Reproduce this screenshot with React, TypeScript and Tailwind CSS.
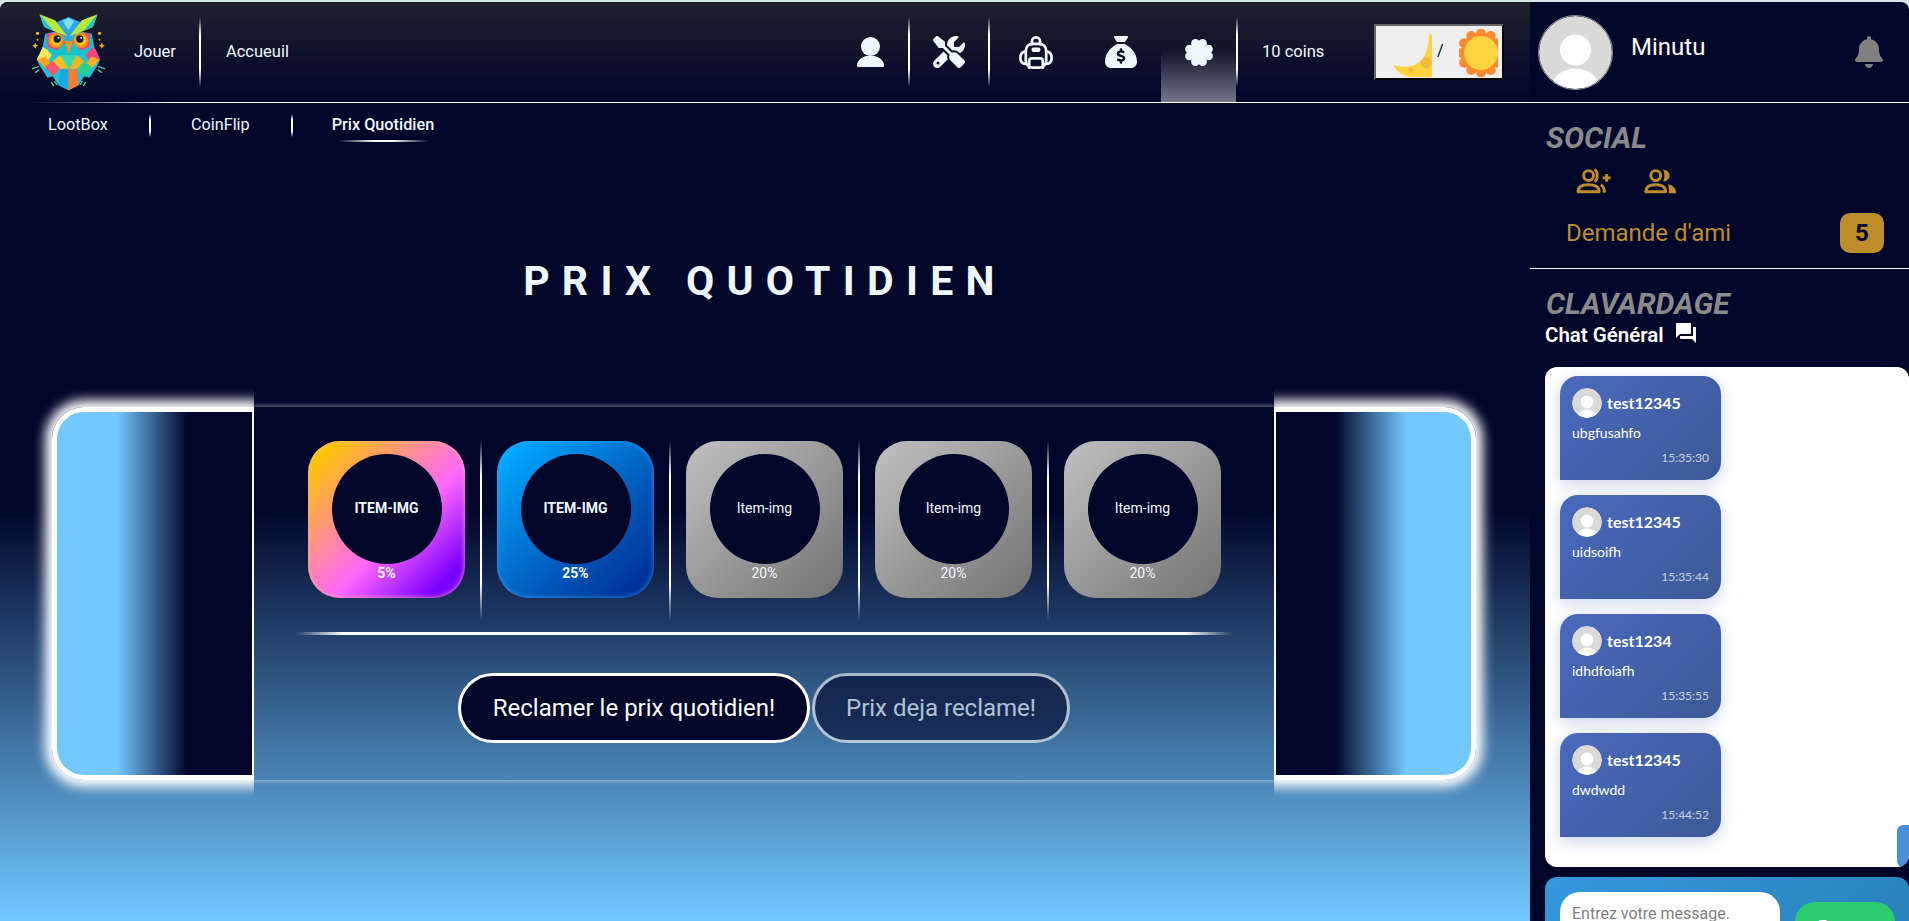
import { FaBell } from 'react-icons/fa';
import { FaScrewdriverWrench, FaSackDollar } from 'react-icons/fa6';
import { MdForum } from 'react-icons/md';

const items = [
  { id: 1, label: 'ITEM-IMG', pct: '5%', rare: true, bg: 'bg-[linear-gradient(135deg,#ffc400_8%,#ff66ff_58%,#7a00ff_88%)] shadow-[inset_0_0_5px_rgba(255,190,150,0.9)]' },
  { id: 2, label: 'ITEM-IMG', pct: '25%', rare: true, bg: 'bg-[linear-gradient(135deg,#00a6ff_8%,#0060c0_55%,#003399_90%)] shadow-[inset_0_0_5px_rgba(60,170,255,0.8)]' },
  { id: 3, label: 'Item-img', pct: '20%', rare: false, bg: 'bg-[linear-gradient(135deg,#bdbdbd_5%,#767676_95%)]' },
  { id: 4, label: 'Item-img', pct: '20%', rare: false, bg: 'bg-[linear-gradient(135deg,#bdbdbd_5%,#767676_95%)]' },
  { id: 5, label: 'Item-img', pct: '20%', rare: false, bg: 'bg-[linear-gradient(135deg,#bdbdbd_5%,#767676_95%)]' },
];

const messages = [
  { id: 1, user: 'test12345', text: 'ubgfusahfo', time: '15:35:30' },
  { id: 2, user: 'test12345', text: 'uidsoifh', time: '15:35:44' },
  { id: 3, user: 'test1234', text: 'idhdfoiafh', time: '15:35:55' },
  { id: 4, user: 'test12345', text: 'dwdwdd', time: '15:44:52' },
];

function VSep() {
  return <div className="h-[70px] w-[2px] shrink-0 bg-[linear-gradient(to_bottom,transparent,white_25%,white_75%,transparent)]" />;
}

function Owl() {
  return (
    <svg viewBox="60 35 230 240" className="ml-[30px] h-[80px] w-[77px] shrink-0">
      {/* sparkles and whiskers */}
      <g fill="#f5b51f">
        <circle cx="82" cy="99" r="5" />
        <circle cx="82" cy="118" r="3" />
        <polygon points="75,127 78,133 84,136 78,139 75,145 72,139 66,136 72,133" />
        <circle cx="268" cy="99" r="5" />
        <circle cx="268" cy="118" r="3" />
        <polygon points="275,127 278,133 284,136 278,139 275,145 272,139 266,136 272,133" />
      </g>
      <g stroke="#4fcf8f" strokeWidth="4" strokeLinecap="round">
        <path d="M67 205l18-6M76 216l10-7M124 246l6 10M134 243l6 10" />
        <path d="M283 205l-18-6M274 216l-10-7M226 246l-6 10M216 243l-6 10" />
      </g>
      {/* body */}
      <polygon points="80,178 100,135 250,135 270,178 262,195 238,232 222,228 205,255 175,270 145,255 128,228 112,232 88,195" fill="#1cc4d8" />
      <polygon points="80,178 100,135 125,165 103,198" fill="#f2e85a" />
      <polygon points="270,178 250,135 225,165 247,198" fill="#f0457f" />
      <polygon points="82,178 106,168 124,192 106,205" fill="#ffa31a" />
      <polygon points="268,178 244,168 226,192 244,205" fill="#ffb01f" />
      <polygon points="104,200 128,182 150,205 128,228" fill="#f9566f" />
      <polygon points="246,200 222,182 200,205 222,228" fill="#2fd08b" />
      <polygon points="128,182 150,165 175,205 150,205" fill="#ffc21f" />
      <polygon points="222,182 200,165 175,205 200,205" fill="#f9b51f" />
      <polygon points="150,207 175,207 175,270 145,255" fill="#19a9e8" />
      <polygon points="200,207 175,207 175,270 205,255" fill="#ff7b2c" />
      <polygon points="175,165 150,165 175,205 200,165" fill="#38dcb4" />
      {/* head */}
      <polygon points="105,100 175,85 245,100 252,140 215,162 175,165 135,162 98,140" fill="#17bfc9" />
      <polygon points="140,65 175,50 210,65 195,100 175,125 155,100" fill="#2aa8ee" />
      <polygon points="158,62 175,52 192,62 175,90" fill="#7fe0f5" />
      <polygon points="110,100 135,96 165,125 140,150 112,140" fill="#f2457f" />
      <polygon points="240,100 215,96 185,125 210,150 238,140" fill="#f2457f" />
      {/* eyes */}
      <circle cx="138" cy="120" r="23" fill="#ff8f1a" />
      <circle cx="212" cy="120" r="23" fill="#ff8f1a" />
      <circle cx="138" cy="120" r="16" fill="#ffc81f" />
      <circle cx="212" cy="120" r="16" fill="#ffc81f" />
      <circle cx="141" cy="116" r="11" fill="#101a4a" />
      <circle cx="209" cy="116" r="11" fill="#101a4a" />
      <circle cx="145" cy="112" r="3" fill="#ffffff" />
      <circle cx="213" cy="112" r="3" fill="#ffffff" />
      {/* brows sit over the eyes */}
      <polygon points="88,42 135,60 172,108 130,92 102,80" fill="#b8e83f" />
      <polygon points="88,42 130,92 102,80" fill="#1fc0d0" />
      <polygon points="262,42 215,60 178,108 220,92 248,80" fill="#b8e83f" />
      <polygon points="262,42 220,92 248,80" fill="#1fc0d0" />
      <polygon points="163,122 187,122 176,163" fill="#ff9326" />
    </svg>
  );
}

function PersonIcon() {
  return (
    <svg viewBox="0 0 27 30" className="h-[30px] w-[27px]" fill="#f0f8ff">
      <ellipse cx="13.5" cy="9.5" rx="9.5" ry="9.5" />
      <path d="M1.5 30C.5 30 0 29.3 0 28.4 0 23 6 18.5 13.5 18.5S27 23 27 28.4c0 .9-.5 1.6-1.5 1.6z" />
    </svg>
  );
}

function BackpackIcon() {
  return (
    <svg viewBox="0 0 100 97" className="h-[33px] w-[34px]" fill="none" stroke="#f0f8ff" strokeWidth="8" strokeLinecap="round" strokeLinejoin="round">
      <path d="M38 24v-8a12 12 0 0 1 24 0v8" />
      <rect x="20" y="23" width="60" height="70" rx="20" />
      <path d="M20 45C8 46 4 56 4 65c0 11 6 17 16 17" />
      <path d="M80 45c12 1 16 11 16 20 0 11-6 17-16 17" />
      <path d="M30 93V74a8 8 0 0 1 8-8h24a8 8 0 0 1 8 8v19" />
      <rect x="41" y="38" width="18" height="5" rx="1" fill="#f0f8ff" />
    </svg>
  );
}

function CloverIcon() {
  return (
    <svg viewBox="0 0 28 27" className="h-[27px] w-[28px]" fill="#f0f8ff">
      <circle cx="10.4" cy="4.4" r="4.3" />
      <circle cx="17.6" cy="4.4" r="4.3" />
      <circle cx="10.4" cy="22.6" r="4.3" />
      <circle cx="17.6" cy="22.6" r="4.3" />
      <circle cx="4.4" cy="10" r="4.3" />
      <circle cx="4.4" cy="17" r="4.3" />
      <circle cx="23.6" cy="10" r="4.3" />
      <circle cx="23.6" cy="17" r="4.3" />
      <polygon points="10,6 18,6 22,10 22,17 18,21 10,21 6,17 6,10" />
    </svg>
  );
}

function MoonIcon() {
  return (
    <svg viewBox="0 0 39 43" className="mt-[8px] h-[43px] w-[39px] shrink-0">
      <path d="M36 1c1-1 3-1 3 1v41H20C10 43 4 38 0 31c14 4 24 1 30-7 4-6 6-14 6-23z" fill="#ffd23f" />
      <circle cx="33" cy="29" r="5.5" fill="#f5b93e" />
      <circle cx="18" cy="36" r="2.5" fill="#f5b93e" />
    </svg>
  );
}

function SunIcon() {
  const bumps = Array.from({ length: 12 }, (_, i) => (i * Math.PI) / 6);
  return (
    <svg viewBox="0 0 39 48" className="mt-[3px] h-[48px] w-[39px] shrink-0">
      {bumps.map((a) => (
        <circle key={a} cx={22 + 19.5 * Math.cos(a)} cy={24 + 19.5 * Math.sin(a)} r="5" fill="#ff8a30" />
      ))}
      <circle cx="22" cy="24" r="20" fill="#ff8a30" />
      <circle cx="22" cy="24" r="17" fill="#ffd23f" />
    </svg>
  );
}

function Avatar({ className }: { className: string }) {
  return (
    <svg viewBox="0 0 75 75" className={`${className} shrink-0 rounded-full`}>
      <clipPath id="avatar-clip">
        <circle cx="37.5" cy="37.5" r="37.5" />
      </clipPath>
      <g clipPath="url(#avatar-clip)">
        <rect width="75" height="75" fill="#d9d9d9" />
        <circle cx="37.5" cy="35" r="16" fill="#ffffff" />
        <ellipse cx="37.5" cy="72" rx="24" ry="18" fill="#ffffff" />
      </g>
    </svg>
  );
}

function FriendAddIcon() {
  return (
    <svg viewBox="15 10 110 85" className="h-[28px] w-[37px]" fill="none" stroke="#bd8c2b" strokeWidth="9">
      <circle cx="55" cy="36" r="15" />
      <path d="M23 85c0-16 16-21 32-21s32 5 32 21z" strokeLinejoin="round" />
      <path d="M73 18c11 4 11 32 0 36" />
      <path d="M92 64c8 4 11 12 11 24" />
      <path d="M98 43h24M110 31v24" />
    </svg>
  );
}

function FriendsIcon() {
  return (
    <svg viewBox="220 10 105 85" className="h-[28px] w-[35px]" fill="none" stroke="#bd8c2b" strokeWidth="9">
      <circle cx="258" cy="36" r="15" />
      <path d="M228 85c0-16 14-21 30-21s30 5 30 21z" strokeLinejoin="round" />
      <path d="M280 18c14 0 20 9 20 18s-6 18-20 18c6-10 6-26 0-36z" fill="#bd8c2b" stroke="none" />
      <path d="M296 62c14 3 24 12 24 28h-22c0-10-1-20-2-28z" fill="#bd8c2b" stroke="none" />
    </svg>
  );
}

function ItemCard({ item }: { item: (typeof items)[number] }) {
  return (
    <div className={`mt-px flex h-[157px] w-[157px] shrink-0 flex-col items-center rounded-[32px] pt-[13px] text-[14px] text-[#f0f8ff] ${item.bg} ${item.rare ? 'font-bold' : ''}`}>
      <div className="flex h-[110px] w-[110px] items-center justify-center rounded-full bg-[#00052a] pb-[2px]">{item.label}</div>
      <div className="leading-[18px]">{item.pct}</div>
    </div>
  );
}

function PrizeCard() {
  return (
    <div className="ml-[52px] mt-[83px] flex h-[373px] w-[1424px]">
      <div className="w-[202px] shrink-0 rounded-l-[32px] border-[5px] border-r-2 border-white bg-[linear-gradient(to_right,#72c8ff_31%,#00052a_67%)] shadow-[0_0_12px_7px_white] [clip-path:inset(-20px_0_-20px_-20px)]" />
      <div className="flex w-[1020px] shrink-0 flex-col items-center shadow-[0_0_5px_1px_rgba(255,255,255,0.5)] [clip-path:inset(-10px_0)]">
        <div className="mt-[33px] flex h-[180px] gap-[15px] self-start pl-[54px]">
          {items.map((item, i) => (
            <div key={item.id} className="flex gap-[15px]">
              <ItemCard item={item} />
              {i < items.length - 1 && (
                <div className="h-[180px] w-[2px] bg-[linear-gradient(to_bottom,transparent,white_20%,white_80%,transparent)]" />
              )}
            </div>
          ))}
        </div>
        <div className="mt-[12px] h-[3px] w-[936px] bg-[linear-gradient(to_right,transparent,white_5%,white_95%,transparent)]" />
        <div className="mt-[38px] flex gap-[2px]">
          <button type="button" className="h-[70px] w-[352px] rounded-[35px] border-[3px] border-white bg-[#00052a] text-[24px] text-white">
            Reclamer le prix quotidien!
          </button>
          <button type="button" className="h-[70px] w-[258px] rounded-[35px] border-[3px] border-white bg-[#00052a] text-[24px] text-white opacity-60">
            Prix deja reclame!
          </button>
        </div>
      </div>
      <div className="w-[202px] shrink-0 rounded-r-[32px] border-[5px] border-l-2 border-white bg-[linear-gradient(to_right,#00052a_30%,#72c8ff_67%)] shadow-[0_0_12px_7px_white] [clip-path:inset(-20px_-20px_-20px_0)]" />
    </div>
  );
}

function Header() {
  return (
    <header className="flex h-[100px] items-center bg-[linear-gradient(to_bottom,#20202e,#00052a)] text-[16.5px] text-[#f0f8ff]">
      <Owl />
      <span className="ml-[27px]">Jouer</span>
      <div className="ml-[23px]"><VSep /></div>
      <span className="ml-[25px]">Accueuil</span>
      <div className="ml-auto flex h-full items-center">
        <div className="flex w-[76px] justify-center"><PersonIcon /></div>
        <VSep />
        <div className="flex w-[78px] justify-center"><FaScrewdriverWrench size={32} color="#f0f8ff" /></div>
        <VSep />
        <div className="flex w-[91px] justify-center"><BackpackIcon /></div>
        <div className="flex w-[80px] justify-center"><FaSackDollar size={32} color="#f0f8ff" /></div>
        <div className="flex h-full w-[75px] items-center justify-center bg-[linear-gradient(to_bottom,transparent_48%,rgba(255,255,255,0.45))]"><CloverIcon /></div>
        <VSep />
        <span className="ml-[24px] w-[112px]">10 coins</span>
        <button type="button" className="mr-[26px] flex h-[56px] w-[130px] items-start border-2 border-b-black border-l-[#666666] border-r-black border-t-[#666666] bg-[#efefef] pl-[17px] text-[16px] leading-[20px] text-black">
          <MoonIcon />
          <span className="ml-[5px] mr-[15px] mt-[15px]">/</span>
          <SunIcon />
        </button>
      </div>
    </header>
  );
}

function SubNav() {
  return (
    <nav className="flex h-[45px] items-center pl-[7px] text-[16.25px] text-[#f0f8ff]">
      <span className="mx-[41px]">LootBox</span>
      <div className="h-[23px] w-[2px] bg-[linear-gradient(to_bottom,transparent,white_25%,white_75%,transparent)]" />
      <span className="ml-[40px] mr-[41px]">CoinFlip</span>
      <div className="h-[23px] w-[2px] bg-[linear-gradient(to_bottom,transparent,white_25%,white_75%,transparent)]" />
      <span className="relative ml-[39px] font-medium">
        Prix Quotidien
        <span className="absolute left-[6px] top-[27px] h-[2px] w-[91px] bg-[linear-gradient(to_right,transparent,white_40%,white_60%,transparent)]" />
      </span>
    </nav>
  );
}

function ChatBubble({ msg }: { msg: (typeof messages)[number] }) {
  return (
    <div className="h-[104px] w-[161px] rounded-[18px] rounded-bl-none bg-[linear-gradient(135deg,#4a69bd,#3c5a96)] px-[12px] pt-[12px] text-white shadow-[0_4px_15px_rgba(74,105,189,0.3)]">
      <div className="flex h-[30px] items-center gap-[5px]">
        <Avatar className="h-[30px] w-[30px]" />
        <span className="text-[16px] font-bold">{msg.user}</span>
      </div>
      <p className="mt-[5px] text-[14px] leading-[20px]">{msg.text}</p>
      <p className="mt-[5px] text-right text-[12px] leading-[20px] opacity-70">{msg.time}</p>
    </div>
  );
}

function Sidebar() {
  return (
    <aside className="flex h-full w-[379px] shrink-0 flex-col bg-[#00052a] text-white">
      <div className="flex h-[100px] shrink-0 items-center pl-[8px] pr-[24px]">
        <div className="rounded-full border border-[#999999]"><Avatar className="h-[73px] w-[73px]" /></div>
        <span className="mb-[10px] ml-[18px] text-[24px]">Minutu</span>
        <FaBell size={32} color="#808080" className="ml-auto" />
      </div>
      <div className="h-px shrink-0 bg-white" />
      <h2 className="ml-[16px] mt-[17px] text-[30px] font-bold italic leading-[36px] text-[#8a8a8a]">SOCIAL</h2>
      <div className="ml-[45px] mt-[11px] flex gap-[31px]">
        <FriendAddIcon />
        <FriendsIcon />
      </div>
      <div className="ml-[36px] mr-[25px] mt-[18px] flex h-[40px] items-center justify-between text-[#bd8c2b]">
        <span className="text-[24px]">Demande d'ami</span>
        <span className="flex h-[40px] w-[44px] items-center justify-center rounded-[10px] bg-[#bd8c2b] text-[24px] font-bold text-[#00052a]">5</span>
      </div>
      <div className="mt-[15px] h-px shrink-0 bg-white" />
      <h2 className="ml-[16px] mt-[17px] text-[30px] font-bold italic leading-[36px] text-[#8a8a8a]">CLAVARDAGE</h2>
      <div className="ml-[15px] flex h-[26px] items-center">
        <span className="text-[20.5px] font-semibold">Chat Général</span>
        <MdForum size={24} className="mb-[5px] ml-[10px]" />
      </div>
      <div className="relative ml-[15px] mt-[19px] h-[500px] shrink-0 overflow-hidden rounded-[12px] bg-white pl-[15px] pt-[9px] font-['Lato',sans-serif]">
        <div className="flex flex-col gap-[15px]">
          {messages.map((msg) => (
            <ChatBubble key={msg.id} msg={msg} />
          ))}
        </div>
        <div className="absolute bottom-0 right-0 h-[42px] w-[12px] rounded-l-[6px] bg-[#4a90d9]" />
      </div>
      <div className="ml-[15px] mt-[10px] flex h-[80px] shrink-0 gap-[15px] rounded-t-[12px] bg-[linear-gradient(135deg,#3498db,#2980b9)] pl-[15px] pt-[15px]">
        <div className="h-[60px] w-[220px] rounded-[20px] bg-white px-[12px] pt-[10px] text-[16px] text-[#808080]">Entrez votre message.</div>
        <div className="mt-[10px] flex h-[50px] w-[100px] justify-center rounded-[20px] bg-[#2ecc71] pt-[13px] text-[15px] font-bold text-white">Envoyer</div>
      </div>
    </aside>
  );
}

export default function App() {
  return (
    <div className="h-screen overflow-hidden bg-[#d6e6e6] pt-[2px] font-['Roboto',sans-serif]">
      <div className="flex h-full overflow-hidden rounded-t-[8px]">
        <main className="flex h-full w-[1530px] shrink-0 flex-col bg-[linear-gradient(to_bottom,#00052a_55%,#72c8ff)]">
          <Header />
          <div className="h-px bg-[linear-gradient(to_right,transparent_30px,white_170px)]" />
          <SubNav />
          <h1 className="mt-[90px] text-center text-[41px] font-bold leading-[86px] tracking-[0.3em] text-[#f0f8ff]">PRIX QUOTIDIEN</h1>
          <PrizeCard />
        </main>
        <Sidebar />
      </div>
    </div>
  );
}
